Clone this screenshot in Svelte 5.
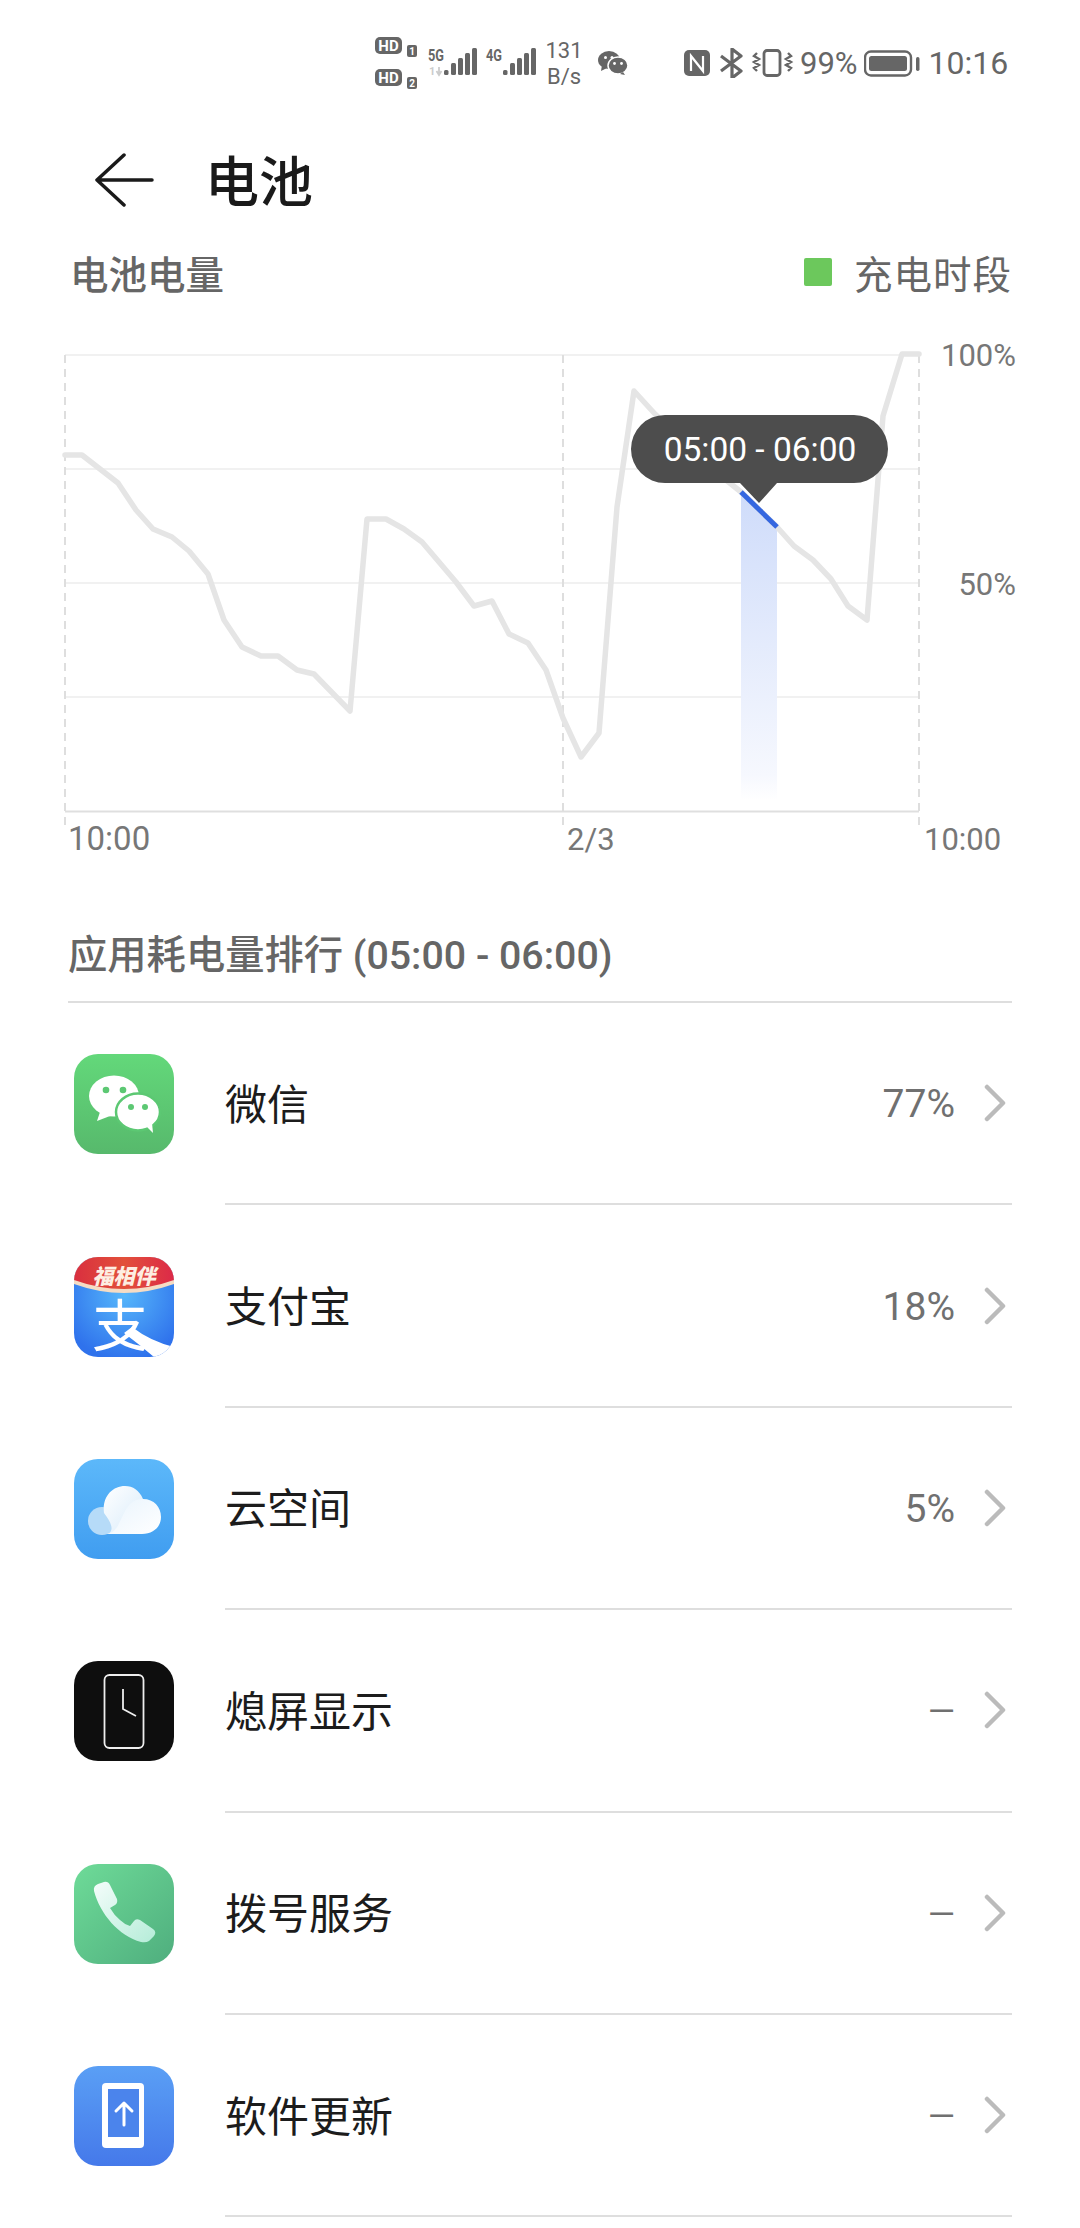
<script>
  const points = [
    [65,457],[82,457],[118,485],[136,512],[153,531],[172,539],[189,553],[208,576],[224,622],[242,649],[261,658],[278,658],[297,672],[314,676],[350,713],[367,521],[386,521],[404,531],[422,544],[456,584],[474,608],[492,603],[509,636],[528,645],[546,672],[563,720],[581,759],[599,735],[617,509],[634,393],[655,416],[673,433],[705,465],[741,494],[777,529],[794,548],[813,562],[831,581],[848,608],[867,622],[883,418],[902,356],[919,356]
  ];
  const line = points.map((p) => p.join(',')).join(' ');
  const rows = [
    { name: '微信', value: '77%', icon: 'wechat' },
    { name: '支付宝', value: '18%', icon: 'alipay' },
    { name: '云空间', value: '5%', icon: 'cloud' },
    { name: '熄屏显示', value: '—', icon: 'aod' },
    { name: '拨号服务', value: '—', icon: 'phone' },
    { name: '软件更新', value: '—', icon: 'update' }
  ];
  const grid = [357, 471, 585, 699];
  const dashed = [65, 563, 919];
</script>

<div class="page">
  <div class="status">
    <svg class="sig" width="165" height="66" viewBox="375 30 165 66">
      <rect x="375" y="37" width="27" height="17" rx="5" fill="#666" />
      <text x="388.500" y="51" class="hd">HD</text>
      <rect x="407" y="45" width="10" height="12" rx="2" fill="#666" />
      <text x="412" y="55" class="sm">1</text>
      <rect x="375" y="69" width="27" height="17" rx="5" fill="#666" />
      <text x="388.500" y="83" class="hd">HD</text>
      <rect x="407" y="77" width="10" height="12" rx="2" fill="#666" />
      <text x="412" y="87" class="sm">2</text>
      <text x="428" y="61" class="net" textLength="16" lengthAdjust="spacingAndGlyphs">5G</text>
      <text x="486" y="61" class="net" textLength="16" lengthAdjust="spacingAndGlyphs">4G</text>
      <text x="429" y="75" class="faint">1</text>
      <path d="M439 67v8M436.500 71l2.500 4 2.500-4" stroke="#ccc" stroke-width="1.800" fill="none" />
      <g fill="#666">
        <rect x="444" y="70" width="4.500" height="5" rx="1.500" />
        <rect x="451" y="63" width="5" height="12" rx="1.500" />
        <rect x="458" y="58" width="5" height="17" rx="1.500" />
        <rect x="465" y="53" width="5" height="22" rx="1.500" />
        <rect x="472" y="48" width="5" height="27" rx="1.500" />
        <rect x="503" y="70" width="4.500" height="5" rx="1.500" />
        <rect x="510" y="63" width="5" height="12" rx="1.500" />
        <rect x="517" y="58" width="5" height="17" rx="1.500" />
        <rect x="524" y="53" width="5" height="22" rx="1.500" />
        <rect x="531" y="48" width="5" height="27" rx="1.500" />
      </g>
    </svg>
    <div class="speed"><span>131</span><span>B/s</span></div>
    <svg class="chat" width="30" height="24" viewBox="0 0 30 24">
      <ellipse cx="11" cy="9" rx="11" ry="9" fill="#666" />
      <path d="M4 14l-1 6 6-3z" fill="#666" />
      <ellipse cx="20" cy="14.500" rx="10" ry="8.500" fill="#666" stroke="#fff" stroke-width="1.500" />
      <path d="M25 21l2 3-5-1z" fill="#666" />
      <circle cx="7.500" cy="6.500" r="1.500" fill="#fff" /><circle cx="14" cy="6.500" r="1.500" fill="#fff" />
      <circle cx="16.500" cy="12.500" r="1.400" fill="#fff" /><circle cx="23.500" cy="12.500" r="1.400" fill="#fff" />
    </svg>
    <svg class="sys" width="112" height="30" viewBox="683 47 112 30">
      <rect x="684" y="49" width="26" height="26" rx="5" fill="#666" />
      <path d="M691 70V55l12 15V55" fill="none" stroke="#fff" stroke-width="2.200" />
      <path d="M721 55l20 15-9 7V48l9 7-20 15" fill="none" stroke="#666" stroke-width="3.200" stroke-linejoin="round" />
      <rect x="764" y="49.500" width="16" height="25" rx="3" fill="none" stroke="#666" stroke-width="2.800" />
      <path d="M757 52l-3 3 5 3-5 3 5 3-5 3 3 3M788 52l3 3-5 3 5 3-5 3 5 3-3 3" fill="none" stroke="#666" stroke-width="2.400" />
    </svg>
    <span class="pct">99%</span>
    <svg class="batt" width="56" height="27" viewBox="864 48 56 27">
      <rect x="865" y="49.500" width="46" height="24" rx="6" fill="none" stroke="#666" stroke-width="2.400" />
      <rect x="869" y="54" width="38" height="15" rx="2.500" fill="#666" />
      <rect x="916" y="55" width="3.500" height="14" rx="1.700" fill="#666" />
    </svg>
    <span class="time">10:16</span>
  </div>

  <div class="nav">
    <svg class="back" width="60" height="56" viewBox="0 0 60 56" aria-hidden="true">
      <path d="M29 2L2 27l27 25M2 27h55" fill="none" stroke="#1a1a1a" stroke-width="3.500" stroke-linecap="round" stroke-linejoin="round" />
    </svg>
    <h1>电池</h1>
  </div>

  <div class="legend">
    <span class="sub">电池电量</span>
    <span class="charge"><i class="swatch"></i><span>充电时段</span></span>
  </div>

  <svg class="chart" width="1080" height="590" viewBox="0 312 1080 590">
    <defs>
      <linearGradient id="barFill" x1="0" y1="0" x2="0" y2="1">
        <stop offset="0" stop-color="#cfdcfa" />
        <stop offset=".92" stop-color="#f6f8fe" />
        <stop offset="1" stop-color="#ffffff" />
      </linearGradient>
    </defs>
    {#each grid as y}
      <line x1="65" x2="919" y1={y} y2={y} stroke="#f1f1f1" stroke-width="2" />
    {/each}
    <line x1="65" x2="919" y1="813.500" y2="813.500" stroke="#dfdfdf" stroke-width="2" />
    {#each dashed as x}
      <line x1={x} x2={x} y1="357" y2="828" stroke="#dedede" stroke-width="2" stroke-dasharray="8 6" />
    {/each}
    <path d="M741 496L777 531V802H741Z" fill="url(#barFill)" />
    <polyline points={line} fill="none" stroke="#e5e5e5" stroke-width="5.500" stroke-linejoin="round" stroke-linecap="round" />
    <line x1="741" y1="494" x2="777" y2="529" stroke="#3567e0" stroke-width="5" />
    <text x="1016" y="368" class="axis end">100%</text>
    <text x="1016" y="597" class="axis end">50%</text>
    <text x="68" y="852" class="axis wide">10:00</text>
    <text x="567" y="852" class="axis">2/3</text>
    <text x="924" y="852" class="axis">10:00</text>
    <path d="M665 417h189a34 34 0 0 1 0 68h-77l-18 20-19-20h-75a34 34 0 0 1 0-68Z" fill="#4d4d4d" />
    <text x="760" y="463" class="tip">05:00 - 06:00</text>
  </svg>

  <div class="section">应用耗电量排行 (05:00 - 06:00)</div>

  <div class="list">
    {#each rows as row}
      <div class="row">
        <svg class="icon" width="100" height="100" viewBox="0 0 100 100">
          <defs>
            <clipPath id="clip-{row.icon}"><rect width="100" height="100" rx="24" /></clipPath>
            <linearGradient id="wg" x1="0" y1="0" x2="0" y2="1"><stop offset="0" stop-color="#63d87a" /><stop offset="1" stop-color="#57b96c" /></linearGradient>
            <radialGradient id="ag" cx=".5" cy=".38" r=".65"><stop offset="0" stop-color="#56b7fb" /><stop offset="1" stop-color="#2f72ec" /></radialGradient>
            <linearGradient id="rg" x1="0" y1="0" x2="1" y2="0"><stop offset="0" stop-color="#d92f3f" /><stop offset=".5" stop-color="#e2503a" /><stop offset="1" stop-color="#dc2a48" /></linearGradient>
            <linearGradient id="cg" x1="0" y1="0" x2="0" y2="1"><stop offset="0" stop-color="#5cb8fa" /><stop offset="1" stop-color="#409df0" /></linearGradient>
            <linearGradient id="pg" x1="0" y1="0" x2="1" y2="1"><stop offset="0" stop-color="#6edb98" /><stop offset="1" stop-color="#4fae7e" /></linearGradient>
            <linearGradient id="hg" x1="0" y1="0" x2="1" y2="1"><stop offset="0" stop-color="#f4fdfb" /><stop offset="1" stop-color="#b5ecd8" /></linearGradient>
            <linearGradient id="ug" x1="0" y1="0" x2="0" y2="1"><stop offset="0" stop-color="#5a9ff5" /><stop offset="1" stop-color="#4579ea" /></linearGradient>
            <linearGradient id="cl" x1="0" y1="0" x2="1" y2="1"><stop offset="0" stop-color="#ffffff" /><stop offset="1" stop-color="#d8ebfa" /></linearGradient>
            <linearGradient id="cr" x1="0" y1="0" x2="1" y2="1"><stop offset="0" stop-color="#e9f4fd" /><stop offset="1" stop-color="#ffffff" /></linearGradient>
          </defs>
          <g clip-path="url(#clip-{row.icon})">
            {#if row.icon === 'wechat'}
              <rect width="100" height="100" fill="url(#wg)" />
              <ellipse cx="40" cy="42" rx="25" ry="20.500" fill="#fff" />
              <path d="M26 58l-3 9 13-5z" fill="#fff" />
              <ellipse cx="64" cy="58" rx="22" ry="18.500" fill="#fff" stroke="#5cc873" stroke-width="2.500" />
              <path d="M73 73l6 6-1-10z" fill="#fff" />
              <circle cx="32" cy="36" r="3.300" fill="#5cc873" /><circle cx="49" cy="36" r="3.300" fill="#5cc873" />
              <circle cx="57" cy="53" r="3" fill="#5cc873" /><circle cx="71" cy="53" r="3" fill="#5cc873" />
            {:else if row.icon === 'alipay'}
              <rect width="100" height="100" fill="url(#ag)" />
              <path d="M0 0H100V27Q50 45 0 27Z" fill="#f5dcc4" />
              <path d="M0 0H100V23Q50 41 0 23Z" fill="url(#rg)" />
              <text x="50" y="27" class="fx">福相伴</text>
              <path d="M58 70Q76 84 100 90V100H80Q66 88 50 76Z" fill="#fff" />
              <text x="46" y="89" class="zhi">支</text>
            {:else if row.icon === 'cloud'}
              <rect width="100" height="100" fill="url(#cg)" />
              <circle cx="28" cy="62" r="14" fill="#b6dbf8" />
              <path d="M33 75C42 72 36 62 30 54C28 38 38 27 51 27C59 27 65 31 69 40L68 75Z" fill="url(#cl)" />
              <path d="M33 75C50 73 46 40 69 40C80 40 87 48 87 58C87 68 79 75 68 75Z" fill="url(#cr)" />
            {:else if row.icon === 'aod'}
              <rect width="100" height="100" fill="#0e0e0e" />
              <rect x="30.500" y="14" width="39" height="73" rx="5" fill="none" stroke="#eee" stroke-width="1.800" />
              <path d="M49 28V48L62 55" fill="none" stroke="#eee" stroke-width="1.800" />
            {:else if row.icon === 'phone'}
              <rect width="100" height="100" fill="url(#pg)" />
              <path d="M20 27Q19 22 24 20L30 18Q34 17 36 21L43 35Q44 39 41 41L36 44Q40 51 46 56Q50 60 56 62L60 57Q62 54 66 56L79 65Q83 68 80 72L75 77Q72 79 67 78C45 72 26 50 20 27Z" fill="url(#hg)" />
            {:else}
              <rect width="100" height="100" fill="url(#ug)" />
              <rect x="28" y="17" width="42" height="65" rx="4" fill="#fff" />
              <rect x="34" y="23" width="31" height="48" fill="#4b84ec" />
              <path d="M50 59V37M42 45l8-8 8 8" fill="none" stroke="#fff" stroke-width="3" stroke-linecap="round" stroke-linejoin="round" />
            {/if}
          </g>
        </svg>
        <div class="body">
          <span class="name">{row.name}</span>
          <span class="value" class:dash={row.value === '—'}>{row.value}</span>
          <svg class="chev" width="22" height="38" viewBox="0 0 22 38"><path d="M3 3l16 16L3 35" fill="none" stroke="#bbb" stroke-width="4.500" stroke-linecap="round" stroke-linejoin="round" /></svg>
        </div>
      </div>
    {/each}
  </div>
</div>

<style>
  :global(body) { margin: 0; background: #fff; }
  .page {
    width: 1080px;
    height: 2228px;
    overflow: hidden;
    background: #fff;
    font-family: Roboto, "Noto Sans CJK SC", sans-serif;
    color: #666;
  }
  .status {
    height: 126px;
    display: flex;
    align-items: center;
    padding-left: 375px;
    box-sizing: border-box;
  }
  .sig { display: block; flex: none; }
  .hd { font: 700 15px Roboto, sans-serif; fill: #fff; text-anchor: middle; }
  .sm { font: 700 10px Roboto, sans-serif; fill: #fff; text-anchor: middle; }
  .net { font: 700 16px Roboto, sans-serif; fill: #666; }
  .faint { font: 700 11px Roboto, sans-serif; fill: #ccc; }
  .speed {
    margin-left: 7px;
    width: 34px;
    display: flex;
    flex-direction: column;
    align-items: center;
    font-size: 22px;
    line-height: 26px;
    margin-top: 2px;
  }
  .chat { margin-left: 17px; flex: none; }
  .sys { margin-left: 55px; flex: none; }
  .pct { margin-left: 5px; font-size: 31px; }
  .batt { margin-left: 6px; flex: none; }
  .time { margin-left: 9px; font-size: 32px; }

  .nav {
    height: 112px;
    display: flex;
    align-items: center;
    padding-left: 95px;
    padding-bottom: 3px;
    box-sizing: border-box;
  }
  .back { flex: none; }
  h1 {
    margin: 0 0 4px 50px;
    font-size: 54px;
    font-weight: 500;
    color: #1a1a1a;
    font-family: "Noto Sans CJK SC", sans-serif;
  }
  .legend {
    height: 72px;
    display: flex;
    align-items: center;
    justify-content: space-between;
    padding: 0 68px 5px 70px;
    box-sizing: border-box;
    font-size: 38.500px;
    font-family: "Noto Sans CJK SC", sans-serif;
    color: #666;
  }
  .sub { font-weight: 500; }
  .charge { display: flex; align-items: center; gap: 22px; letter-spacing: 1px; }
  .swatch { width: 28px; height: 28px; background: #6cc85c; border-radius: 2px; display: block; }
  .chart { display: block; }
  .axis { font: 400 31px Roboto, sans-serif; fill: #777; }
  .wide { font-size: 33px; }
  .end { text-anchor: end; }
  .tip { font: 400 33.500px Roboto, sans-serif; fill: #fff; text-anchor: middle; }
  .section {
    height: 103px;
    box-sizing: border-box;
    margin: 0 68px;
    border-bottom: 2px solid #dedede;
    display: flex;
    align-items: center;
    padding-top: 2px;
    font-size: 39.300px;
    font-weight: 500;
    color: #666;
    white-space: pre;
  }
  .row {
    height: 202.400px;
    display: flex;
    align-items: center;
    padding-left: 74px;
  }
  .icon { flex: none; display: block; }
  .fx { font: italic 900 21px "Noto Sans CJK SC", sans-serif; fill: #fdeee2; text-anchor: middle; }
  .zhi { font: 400 56px "Noto Sans CJK SC", sans-serif; fill: #fff; text-anchor: middle; }
  .body {
    flex: 1;
    align-self: stretch;
    margin: 0 68px 0 51px;
    box-sizing: border-box;
    border-bottom: 2px solid #dedede;
    display: flex;
    align-items: center;
  }
  .name {
    flex: 1;
    font-size: 42px;
    color: #1c1c1c;
    font-family: "Noto Sans CJK SC", sans-serif;
    padding-bottom: 4px;
  }
  .value { font-size: 39px; color: #707070; padding-top: 2px; }
  .dash { font-size: 35px; padding-top: 3px; }
  .chev { margin-left: 29px; margin-right: 6px; flex: none; }
</style>
